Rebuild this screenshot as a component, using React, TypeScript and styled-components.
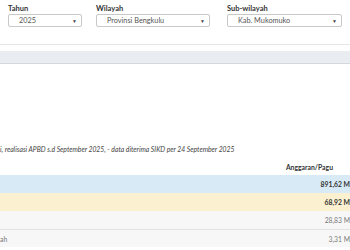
import styled, { createGlobalStyle } from 'styled-components';

const GlobalStyle = createGlobalStyle`
  html, body {
    margin: 0;
    padding: 0;
    background: #ffffff;
    font-family: Lato, "Open Sans", sans-serif;
    color: #333;
    overflow: hidden;
  }
`;

export const Page = styled.div`
  width: 350px;
  height: 250px;
  overflow: hidden;
`;

export const FilterBar = styled.div`
  display: flex;
  padding: 3px 0 0 8px;
  border-bottom: 1px solid #e6e6e6;
  box-sizing: border-box;
  height: 45px;
`;

export const Field = styled.div<{ $w: number; $ml: number }>`
  width: ${p => p.$w}px;
  margin-left: ${p => p.$ml}px;
  display: flex;
  flex-direction: column;
`;

export const Label = styled.div`
  font-size: 7.5px;
  font-weight: 700;
  color: #333;
  height: 11px;
  line-height: 11px;
`;

export const Select = styled.div`
  height: 13px;
  box-sizing: border-box;
  border: 1px solid #c8c8c8;
  border-radius: 2px;
  display: flex;
  align-items: center;
  justify-content: space-between;
  padding: 0 4px 0 10px;
  font-size: 7.3px;
  color: #555;
`;

export const Caret = styled.span`
  font-size: 5px;
  color: #444;
`;

export const Band = styled.div`
  margin-top: 6px;
  height: 12px;
  background: #e9ecf1;
  border-bottom: 1px solid #d3d8df;
`;

export const Note = styled.div`
  margin-top: 80px;
  font-size: 6.8px;
  font-style: italic;
  color: #444;
  white-space: nowrap;
  height: 10px;
  line-height: 10px;
`;

export const Table = styled.div`
  margin-top: 4px;
  display: flex;
  flex-direction: column;
`;

export const Row = styled.div<{ $bg: string; $bold?: boolean; $border?: boolean }>`
  display: flex;
  justify-content: space-between;
  align-items: center;
  height: 18px;
  background: ${p => p.$bg};
  font-size: 6.8px;
  font-weight: ${p => (p.$bold ? 700 : 400)};
  color: ${p => (p.$bold ? '#333' : '#777')};
  border-top: ${p => (p.$border ? '1px solid #e3e3e3' : 'none')};
  box-sizing: border-box;
  padding-right: 0;
`;

export const Head = styled.div`
  height: 17px;
  display: flex;
  align-items: center;
  justify-content: flex-end;
  font-size: 6.8px;
  font-weight: 700;
  color: #333;
  padding-right: 17px;
`;

export const Cell = styled.span`
  white-space: nowrap;
`;

export default function App() {
  return (
    <Page>
      <GlobalStyle />
      <FilterBar>
        <Field $w={74} $ml={0}>
          <Label>Tahun</Label>
          <Select>2025<Caret>▼</Caret></Select>
        </Field>
        <Field $w={114} $ml={14}>
          <Label>Wilayah</Label>
          <Select>Provinsi Bengkulu<Caret>▼</Caret></Select>
        </Field>
        <Field $w={115} $ml={17}>
          <Label>Sub-wilayah</Label>
          <Select>Kab. Mukomuko<Caret>▼</Caret></Select>
        </Field>
      </FilterBar>
      <Band />
      <Note>i, realisasi APBD s.d September 2025, - data diterima SIKD per 24 September 2025</Note>
      <Table>
        <Head>Anggaran/Pagu</Head>
        <Row $bg="#d7eaf6" $bold><Cell /><Cell>891,62 M</Cell></Row>
        <Row $bg="#fbf0cf" $bold><Cell /><Cell>68,92 M</Cell></Row>
        <Row $bg="#f7f7f7"><Cell /><Cell>28,83 M</Cell></Row>
        <Row $bg="#f7f7f7" $border><Cell>ah</Cell><Cell>3,31 M</Cell></Row>
      </Table>
    </Page>
  );
}
